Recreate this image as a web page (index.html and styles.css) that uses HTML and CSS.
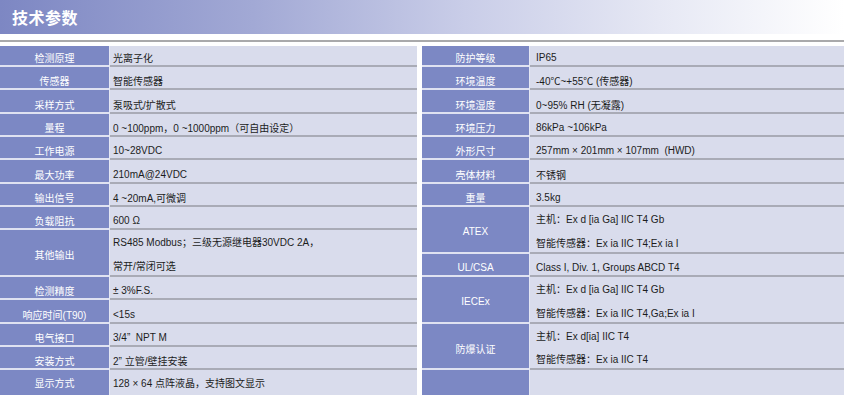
FILE: index.html
```html
<!DOCTYPE html>
<html lang="zh">
<head>
<meta charset="utf-8">
<title>技术参数</title>
<link rel="stylesheet" href="styles.css">
</head>
<body>
<div class="page">
  <div class="banner"><h1 class="title">技术参数</h1></div>
  <div class="rule"></div>
  <div class="tables">
    <div class="spec spec-left">
      <div class="row first"><div class="lab">检测原理</div><div class="val">光离子化</div></div>
      <div class="row"><div class="lab">传感器</div><div class="val">智能传感器</div></div>
      <div class="row"><div class="lab">采样方式</div><div class="val">泵吸式/扩散式</div></div>
      <div class="row"><div class="lab">量程</div><div class="val">0 ~100ppm，0 ~1000ppm（可自由设定）</div></div>
      <div class="row"><div class="lab">工作电源</div><div class="val">10~28VDC</div></div>
      <div class="row"><div class="lab">最大功率</div><div class="val">210mA@24VDC</div></div>
      <div class="row"><div class="lab">输出信号</div><div class="val">4 ~20mA,可微调</div></div>
      <div class="row"><div class="lab">负载阻抗</div><div class="val">600 Ω</div></div>
      <div class="row double"><div class="lab">其他输出</div><div class="val"><span>RS485 Modbus；三级无源继电器30VDC 2A，</span><span>常开/常闭可选</span></div></div>
      <div class="row"><div class="lab">检测精度</div><div class="val">± 3%F.S.</div></div>
      <div class="row"><div class="lab">响应时间(T90)</div><div class="val">&lt;15s</div></div>
      <div class="row"><div class="lab">电气接口</div><div class="val">3/4”&nbsp;&nbsp;NPT M</div></div>
      <div class="row"><div class="lab">安装方式</div><div class="val">2” 立管/壁挂安装</div></div>
      <div class="row last"><div class="lab">显示方式</div><div class="val">128 × 64 点阵液晶，支持图文显示</div></div>
    </div>
    <div class="spec spec-right">
      <div class="row first"><div class="lab">防护等级</div><div class="val">IP65</div></div>
      <div class="row"><div class="lab">环境温度</div><div class="val">-40℃~+55℃ (传感器)</div></div>
      <div class="row"><div class="lab">环境湿度</div><div class="val">0~95% RH (无凝露)</div></div>
      <div class="row"><div class="lab">环境压力</div><div class="val">86kPa ~106kPa</div></div>
      <div class="row"><div class="lab">外形尺寸</div><div class="val">257mm × 201mm × 107mm&nbsp;&nbsp;(HWD)</div></div>
      <div class="row"><div class="lab">壳体材料</div><div class="val">不锈钢</div></div>
      <div class="row"><div class="lab">重量</div><div class="val">3.5kg</div></div>
      <div class="row double"><div class="lab">ATEX</div><div class="val"><span>主机：Ex d [ia Ga] IIC T4 Gb</span><span>智能传感器：Ex ia IIC T4;Ex ia I</span></div></div>
      <div class="row"><div class="lab">UL/CSA</div><div class="val">Class I, Div. 1, Groups ABCD T4</div></div>
      <div class="row double"><div class="lab">IECEx</div><div class="val"><span>主机：Ex d [ia Ga] IIC T4 Gb</span><span>智能传感器：Ex ia IIC T4,Ga;Ex ia I</span></div></div>
      <div class="row double"><div class="lab">防爆认证</div><div class="val"><span>主机：Ex d[ia] IIC T4</span><span>智能传感器：Ex ia IIC T4</span></div></div>
      <div class="row last"><div class="lab"></div><div class="val"></div></div>
    </div>
  </div>
</div>
</body>
</html>
```
FILE: styles.css
```css
html, body {
  margin: 0;
  padding: 0;
  background: #ffffff;
}
body {
  width: 844px;
  height: 395px;
  overflow: hidden;
  font-family: "Liberation Sans", "Noto Sans CJK SC", sans-serif;
  font-size: 10px;
  color: #1c1c1c;
}
.banner {
  height: 34px;
  background: linear-gradient(to right, #7d87c3 0%, #a2a9d5 30%, #c9cde8 55%, #e6e8f4 78%, #ffffff 100%);
  display: flex;
  align-items: center;
  padding-left: 12px;
}
.title {
  margin: 0;
  font-size: 16px;
  font-weight: bold;
  color: #ffffff;
  letter-spacing: 0.5px;
  font-family: "Noto Sans CJK SC", sans-serif;
}
.rule {
  margin-top: 6px;
  height: 2px;
  background: #a9a9ab;
}
.tables {
  margin-top: 4px;
  display: flex;
  gap: 5px;
}
.spec {
  display: flex;
  flex-direction: column;
}
.spec-left { width: 417px; }
.spec-right { width: 422px; }
.row {
  display: flex;
  height: 23.35px;
  box-sizing: border-box;
}
.row.first { height: 21px; }
.row.double { height: 46.7px; }
.row.last { height: 24.5px; }
.lab, .val {
  box-sizing: border-box;
  display: flex;
  align-items: center;
  padding-top: 6px;
}
.lab {
  background: #7c88c4;
  color: #ffffff;
  justify-content: center;
  border-bottom: 2px solid #dfe2f1;
  border-right: 1px solid #e4e7f3;
}
.val {
  flex: 1;
  background: #d9dcec;
  border-bottom: 2px solid #a9abb6;
  white-space: nowrap;
}
.spec-left .lab { width: 110px; }
.spec-left .val { padding-left: 3px; }
.spec-right .lab { width: 108px; }
.spec-right .val { padding-left: 6px; }
.row.first .lab, .row.first .val { padding-top: 3px; }
.row.last .lab, .row.last .val { padding-top: 0; border-bottom: none; }
.row.double .lab { padding-top: 4px; }
.row.double .val {
  flex-direction: column;
  align-items: flex-start;
  justify-content: flex-start;
  padding-top: 1px;
  line-height: 23.5px;
}
```
